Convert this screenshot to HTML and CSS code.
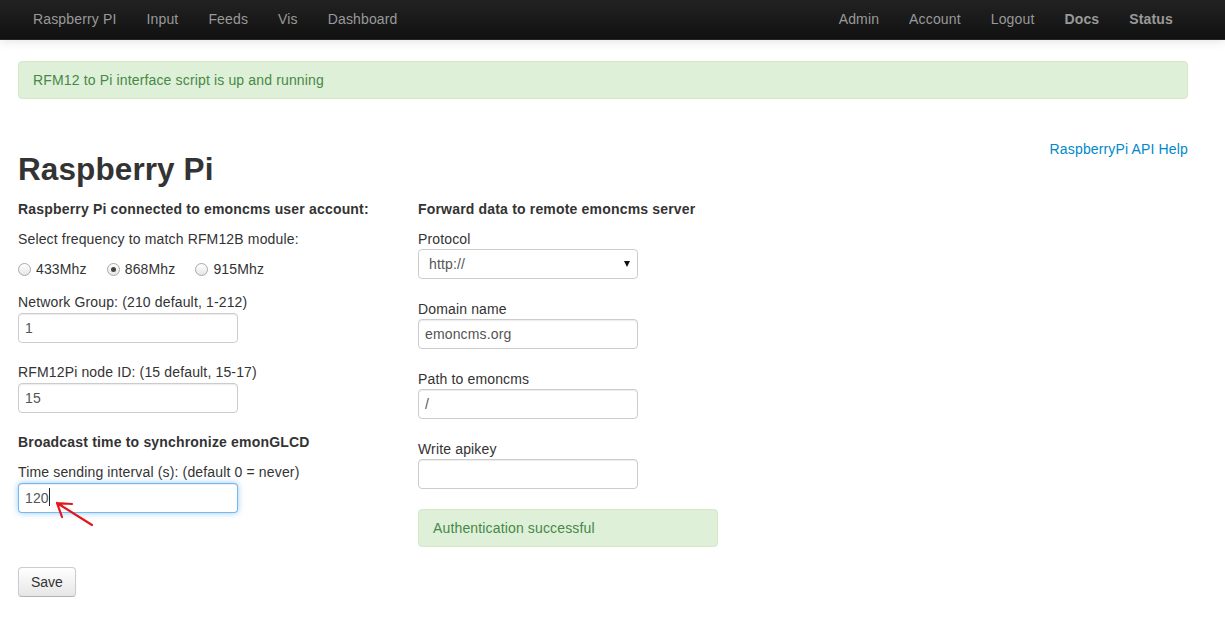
FILE: index.html
```html
<!DOCTYPE html>
<html>
<head>
<meta charset="utf-8">
<title>Raspberry Pi</title>
<link rel="stylesheet" href="styles.css">
</head>
<body>
<div class="navbar">
  <div class="navbar-inner">
    <ul class="nav">
      <li><a href="#">Raspberry PI</a></li>
      <li><a href="#">Input</a></li>
      <li><a href="#">Feeds</a></li>
      <li><a href="#">Vis</a></li>
      <li><a href="#">Dashboard</a></li>
    </ul>
    <ul class="nav">
      <li><a href="#">Admin</a></li>
      <li><a href="#">Account</a></li>
      <li><a href="#">Logout</a></li>
      <li><a href="#" class="strong">Docs</a></li>
      <li><a href="#" class="strong">Status</a></li>
    </ul>
  </div>
</div>

<div class="container">
  <div class="alert">RFM12 to Pi interface script is up and running</div>

  <div class="header">
    <h2>Raspberry Pi</h2>
    <a href="#" class="help">RaspberryPi API Help</a>
  </div>

  <div class="columns">
    <div class="col-left">
      <div class="section-title">Raspberry Pi connected to emoncms user account:</div>
      <p class="text">Select frequency to match RFM12B module:</p>
      <div class="radios">
        <label class="radio"><span class="radio-dot"></span>433Mhz</label>
        <label class="radio"><span class="radio-dot checked"></span>868Mhz</label>
        <label class="radio"><span class="radio-dot"></span>915Mhz</label>
      </div>
      <label class="field-label">Network Group: (210 default, 1-212)</label>
      <input class="field" type="text" value="1">
      <label class="field-label">RFM12Pi node ID: (15 default, 15-17)</label>
      <input class="field" type="text" value="15">
      <div class="section-title second">Broadcast time to synchronize emonGLCD</div>
      <label class="field-label">Time sending interval (s): (default 0 = never)</label>
      <div class="focus-wrap">
        <input class="field focused" type="text" value="120">
        <span class="caret"></span>
        <svg class="arrow" width="44" height="30" viewBox="0 0 44 30">
          <path d="M3 4 L38 26 M3 4 L18 5 M3 4 L8 18" fill="none" stroke="#e4161c" stroke-width="2.2" stroke-linecap="round" stroke-linejoin="round"/>
        </svg>
      </div>
      <button class="btn">Save</button>
    </div>

    <div class="col-right">
      <div class="section-title">Forward data to remote emoncms server</div>
      <label class="rlabel">Protocol</label>
      <div class="select-wrap">
        <select class="select"><option>http://</option><option>https://</option></select>
        <span class="select-arrow"></span>
      </div>
      <label class="rlabel">Domain name</label>
      <input class="field rfield" type="text" value="emoncms.org">
      <label class="rlabel">Path to emoncms</label>
      <input class="field rfield" type="text" value="/">
      <label class="rlabel">Write apikey</label>
      <input class="field rfield" type="text" value="">
      <div class="alert small">Authentication successful</div>
    </div>
  </div>
</div>
</body>
</html>
```

FILE: styles.css
```css
* { box-sizing: border-box; }

body {
  margin: 0;
  font-family: "Liberation Sans", Arial, Helvetica, sans-serif;
  font-size: 14px;
  line-height: 20px;
  letter-spacing: 0.15px;
  color: #333333;
  background: #ffffff;
}

.navbar {
  height: 40px;
  background: linear-gradient(to bottom, #222222, #111111);
  border-bottom: 1px solid #252525;
  box-shadow: 0 1px 10px rgba(0, 0, 0, 0.12);
}

.navbar-inner {
  width: 1170px;
  margin-left: 18px;
  display: flex;
  justify-content: space-between;
}

.nav {
  list-style: none;
  margin: 0;
  padding: 0;
  display: flex;
}

.nav a {
  display: block;
  padding: 9px 15px 10px;
  line-height: 20px;
  color: #999999;
  text-decoration: none;
}

.nav a.strong { font-weight: bold; }

.container {
  width: 1170px;
  margin-left: 18px;
  padding-top: 21px;
}

.alert {
  padding: 8px 35px 8px 14px;
  background: #dff0d8;
  border: 1px solid #d6e9c6;
  border-radius: 4px;
  color: #468847;
  margin-bottom: 39px;
}

.alert.small {
  width: 300px;
  margin: 20px 0 0;
}

.header {
  display: flex;
  justify-content: space-between;
  align-items: flex-start;
}

h2 {
  margin: 11px 0 10px;
  font-size: 31.5px;
  line-height: 40px;
  font-weight: bold;
  letter-spacing: 0.1px;
  color: #333333;
}

.help {
  margin-top: 1px;
  color: #0088cc;
  text-decoration: none;
}

.columns {
  display: flex;
}

.col-left { width: 400px; }
.col-right { width: 400px; }

.section-title {
  font-weight: bold;
  letter-spacing: 0.18px;
  margin-bottom: 10px;
}

.section-title.second { margin-top: 1px; }

.text {
  margin: 0 0 10px;
}

.radios {
  display: flex;
  align-items: center;
  height: 20px;
  margin-bottom: 13px;
}

.radio {
  display: flex;
  align-items: center;
  margin-right: 20px;
}

.radio-dot {
  width: 13px;
  height: 13px;
  margin-right: 5px;
  border-radius: 50%;
  border: 1px solid #a9a9a9;
  background: linear-gradient(to bottom, #ffffff, #e6e6e6);
  display: flex;
  align-items: center;
  justify-content: center;
}

.radio-dot.checked::after {
  content: "";
  width: 5px;
  height: 5px;
  border-radius: 50%;
  background: #444444;
}

.field-label {
  display: block;
  margin-bottom: 1px;
}

.field {
  display: block;
  width: 220px;
  height: 30px;
  padding: 4px 6px;
  margin: 0 0 19px;
  font-family: "Liberation Sans", Arial, Helvetica, sans-serif;
  font-size: 14px;
  line-height: 20px;
  letter-spacing: 0.15px;
  color: #555555;
  background: #ffffff;
  border: 1px solid #cccccc;
  border-radius: 4px;
  box-shadow: inset 0 1px 1px rgba(0, 0, 0, 0.075);
  outline: none;
}

.focus-wrap {
  position: relative;
  width: 220px;
}

.field.focused {
  margin: 0;
  border-color: rgba(82, 168, 236, 0.8);
  box-shadow: inset 0 1px 1px rgba(0, 0, 0, 0.075), 0 0 6px rgba(82, 168, 236, 0.6);
}

.caret {
  position: absolute;
  left: 31px;
  top: 5px;
  width: 1px;
  height: 18px;
  background: #222222;
}

.arrow {
  position: absolute;
  left: 36px;
  top: 16px;
}

.btn {
  display: block;
  margin-top: 54px;
  height: 30px;
  padding: 4px 12px;
  font-family: "Liberation Sans", Arial, Helvetica, sans-serif;
  font-size: 14px;
  line-height: 20px;
  letter-spacing: 0;
  color: #333333;
  background: linear-gradient(to bottom, #ffffff, #e6e6e6);
  border: 1px solid #cccccc;
  border-bottom-color: #b3b3b3;
  border-radius: 4px;
  box-shadow: inset 0 1px 0 rgba(255, 255, 255, 0.2), 0 1px 2px rgba(0, 0, 0, 0.05);
}

.rlabel {
  display: block;
}

.rfield {
  margin-bottom: 20px;
}

.col-right .rfield:last-of-type { margin-bottom: 0; }

.select-wrap {
  position: relative;
  width: 220px;
  margin-bottom: 20px;
}

.select {
  display: block;
  width: 220px;
  height: 30px;
  padding: 4px 10px;
  font-family: "Liberation Sans", Arial, Helvetica, sans-serif;
  font-size: 14px;
  letter-spacing: 0.15px;
  color: #555555;
  background: #ffffff;
  border: 1px solid #cccccc;
  border-radius: 4px;
  -webkit-appearance: none;
  appearance: none;
  outline: none;
}

.select-arrow {
  position: absolute;
  right: 8px;
  top: 12px;
  width: 0;
  height: 0;
  border-left: 3.5px solid transparent;
  border-right: 3.5px solid transparent;
  border-top: 6px solid #111111;
}
```
